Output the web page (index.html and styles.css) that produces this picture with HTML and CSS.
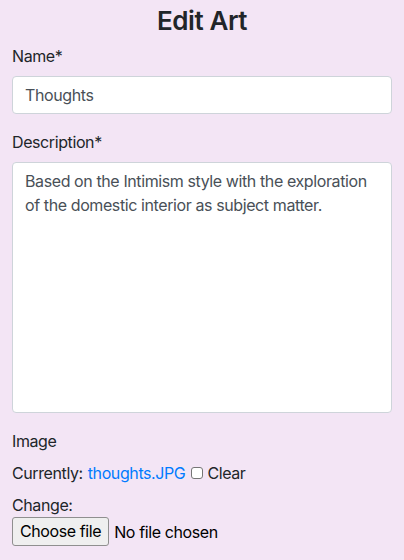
FILE: index.html
```html
<!DOCTYPE html>
<html lang="en">
<head>
<meta charset="utf-8">
<title>Edit Art</title>
<link rel="stylesheet" href="styles.css">
</head>
<body>
<main class="page">
  <h3 class="title">Edit Art</h3>
  <form class="form">
    <div class="group">
      <label class="label" for="name">Name*</label>
      <input class="control" id="name" type="text" value="Thoughts">
    </div>
    <div class="group">
      <label class="label" for="desc">Description*</label>
      <textarea class="control area" id="desc">Based on the Intimism style with the exploration of the domestic interior as subject matter.</textarea>
    </div>
    <div class="group">
      <label class="label">Image</label>
      <div class="current"><span>Currently:</span><a class="link" href="#">thoughts.JPG</a><span class="check"></span><span>Clear</span></div>
      <div class="change">Change:</div>
      <div class="file"><span class="file-btn">Choose file</span><span class="file-text">No file chosen</span></div>
    </div>
  </form>
</main>
</body>
</html>
```

FILE: styles.css
```css
html, body {
  margin: 0;
  padding: 0;
  background: #f3e5f5;
}
body {
  font-family: Inter, "Noto Sans", sans-serif;
  font-size: 16px;
  line-height: 1.5;
  letter-spacing: -0.4px;
  color: #212529;
}
.page {
  padding: 6px 12px 0 12px;
}
.title {
  margin: 0 0 8px 0;
  text-align: center;
  font-size: 26px;
  font-weight: 600;
  line-height: 30px;
  letter-spacing: -0.4px;
}
.form {
  display: flex;
  flex-direction: column;
}
.group {
  margin-bottom: 16px;
  display: flex;
  flex-direction: column;
}
.label {
  display: block;
  margin-bottom: 8px;
}
.control {
  box-sizing: border-box;
  width: 100%;
  height: 38px;
  padding: 6px 12px;
  font-family: inherit;
  font-size: 16px;
  line-height: 1.5;
  letter-spacing: -0.4px;
  color: #495057;
  background: #fff;
  border: 1px solid #ced4da;
  border-radius: 4px;
  margin: 0;
}
.area {
  height: 251px;
  resize: none;
  display: block;
}
.current {
  display: flex;
  align-items: center;
  margin-bottom: 8px;
}
.link {
  color: #007bff;
  text-decoration: none;
  margin-left: 5px;
}
.check {
  display: inline-block;
  box-sizing: border-box;
  width: 12px;
  height: 12px;
  border: 1px solid #767676;
  border-radius: 3px;
  background: #fff;
  margin: 0 4px 0 6px;
}
.file {
  display: flex;
  align-items: center;
  gap: 5px;
}
.file-btn {
  display: inline-block;
  box-sizing: border-box;
  height: 29px;
  line-height: 27px;
  padding: 0 7px;
  background: #efefef;
  border: 1px solid #8f8f8f;
  border-radius: 3px;
  color: #000;
}
.file-text {
  color: #000;
}
```
